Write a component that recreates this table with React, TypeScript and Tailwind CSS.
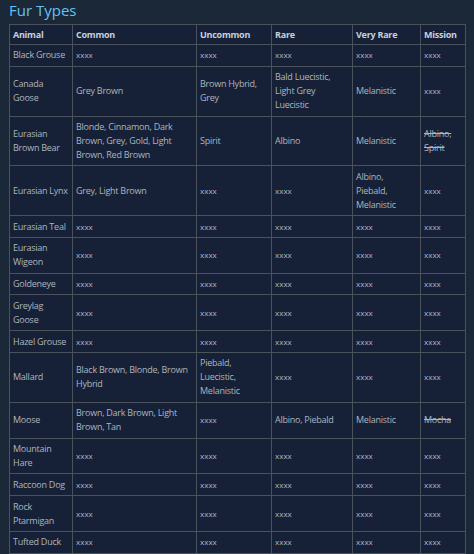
const rows: { animal: string; common: string; uncommon: string; rare: string; veryRare: string; mission: string; struck?: boolean }[] = [
  { animal: "Black Grouse", common: "xxxx", uncommon: "xxxx", rare: "xxxx", veryRare: "xxxx", mission: "xxxx" },
  { animal: "Canada Goose", common: "Grey Brown", uncommon: "Brown Hybrid, Grey", rare: "Bald Luecistic, Light Grey Luecistic", veryRare: "Melanistic", mission: "xxxx" },
  { animal: "Eurasian Brown Bear", common: "Blonde, Cinnamon, Dark Brown, Grey, Gold, Light Brown, Red Brown", uncommon: "Spirit", rare: "Albino", veryRare: "Melanistic", mission: "Albino, Spirit", struck: true },
  { animal: "Eurasian Lynx", common: "Grey, Light Brown", uncommon: "xxxx", rare: "xxxx", veryRare: "Albino,\nPiebald,\nMelanistic", mission: "xxxx" },
  { animal: "Eurasian Teal", common: "xxxx", uncommon: "xxxx", rare: "xxxx", veryRare: "xxxx", mission: "xxxx" },
  { animal: "Eurasian Wigeon", common: "xxxx", uncommon: "xxxx", rare: "xxxx", veryRare: "xxxx", mission: "xxxx" },
  { animal: "Goldeneye", common: "xxxx", uncommon: "xxxx", rare: "xxxx", veryRare: "xxxx", mission: "xxxx" },
  { animal: "Greylag Goose", common: "xxxx", uncommon: "xxxx", rare: "xxxx", veryRare: "xxxx", mission: "xxxx" },
  { animal: "Hazel Grouse", common: "xxxx", uncommon: "xxxx", rare: "xxxx", veryRare: "xxxx", mission: "xxxx" },
  { animal: "Mallard", common: "Black Brown, Blonde, Brown Hybrid", uncommon: "Piebald, Luecistic, Melanistic", rare: "xxxx", veryRare: "xxxx", mission: "xxxx" },
  { animal: "Moose", common: "Brown, Dark Brown, Light Brown, Tan", uncommon: "xxxx", rare: "Albino, Piebald", veryRare: "Melanistic", mission: "Mocha", struck: true },
  { animal: "Mountain Hare", common: "xxxx", uncommon: "xxxx", rare: "xxxx", veryRare: "xxxx", mission: "xxxx" },
  { animal: "Raccoon Dog", common: "xxxx", uncommon: "xxxx", rare: "xxxx", veryRare: "xxxx", mission: "xxxx" },
  { animal: "Rock Ptarmigan", common: "xxxx", uncommon: "xxxx", rare: "xxxx", veryRare: "xxxx", mission: "xxxx" },
  { animal: "Tufted Duck", common: "xxxx", uncommon: "xxxx", rare: "xxxx", veryRare: "xxxx", mission: "xxxx" },
];

const Cell = ({ text, struck }: { text: string; struck?: boolean }) => (
  <td className="border border-[#4a525c] px-[3px] py-[3.4px] align-middle whitespace-pre-line">
    {text === "xxxx" ? (
      <span className="text-[8px] tracking-normal">xxxx</span>
    ) : (
      <span className={struck ? "line-through" : ""}>{text}</span>
    )}
  </td>
);

export default function App() {
  return (
    <div className="w-[474px] h-[554px] overflow-hidden bg-[#1b2838] pl-[9px] font-['Open_Sans',sans-serif]">
      <h2 className="text-[15px] leading-[20px] text-[#66c0f4]">Fur Types</h2>
      <table className="table-fixed border-collapse w-[456px] mt-[4px] bg-[#162138] text-[9px] leading-[14px] tracking-[-0.25px] text-[#adb5bd]">
        <colgroup>
          <col className="w-[63px]" />
          <col className="w-[124px]" />
          <col className="w-[75px]" />
          <col className="w-[81px]" />
          <col className="w-[68px]" />
          <col className="w-[45px]" />
        </colgroup>
        <thead>
          <tr className="text-[#c6d0da] text-left">
            {["Animal", "Common", "Uncommon", "Rare", "Very Rare", "Mission"].map((h) => (
              <th key={h} className="border border-[#4a525c] px-[3px] py-[2.5px] font-bold">
                {h}
              </th>
            ))}
          </tr>
        </thead>
        <tbody>
          {rows.map((r) => (
            <tr key={r.animal}>
              <Cell text={r.animal} />
              <Cell text={r.common} />
              <Cell text={r.uncommon} />
              <Cell text={r.rare} />
              <Cell text={r.veryRare} />
              <Cell text={r.mission} struck={r.struck} />
            </tr>
          ))}
        </tbody>
      </table>
    </div>
  );
}
